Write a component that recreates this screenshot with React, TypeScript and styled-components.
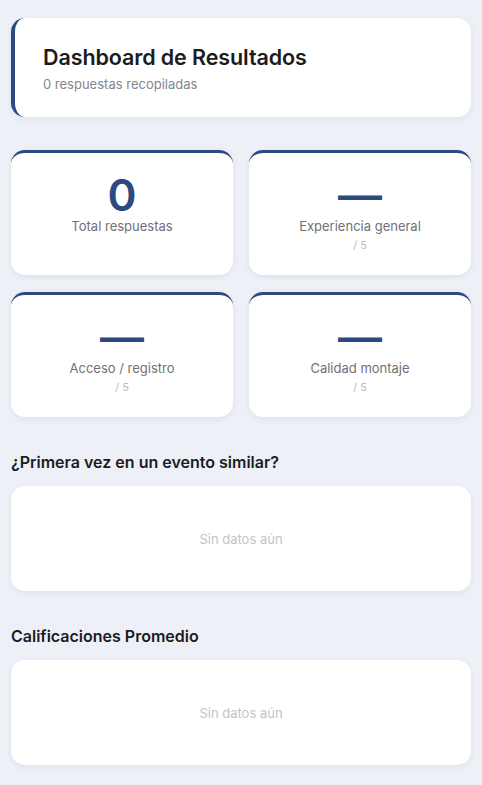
import styled, { createGlobalStyle } from "styled-components";

const GlobalStyle = createGlobalStyle`
  body {
    margin: 0;
    background: #edf0f7;
    font-family: Inter, "Noto Sans", sans-serif;
  }
`;

const Page = styled.div`
  padding: 18px 11px 20px;
`;

const HeaderCard = styled.div`
  background: #ffffff;
  border-left: 4px solid #2b4a80;
  border-radius: 14px;
  padding: 25px 28px 24px;
  box-shadow: 0 2px 6px rgba(30, 40, 70, 0.07);
`;

const Title = styled.h1`
  margin: 0;
  font-size: 21.5px;
  font-weight: 600;
  line-height: 28px;
  color: #1b1c20;
  letter-spacing: -0.1px;
`;

const Subtitle = styled.div`
  margin-top: 4px;
  font-size: 13px;
  line-height: 18px;
  color: #85868c;
`;

const StatGrid = styled.div`
  display: grid;
  grid-template-columns: 1fr 1fr;
  gap: 17px 16px;
  margin-top: 33px;
`;

const StatCard = styled.div`
  background: #ffffff;
  border-top: 3px solid #2b4a80;
  border-radius: 14px;
  height: 125px;
  box-sizing: border-box;
  display: flex;
  flex-direction: column;
  align-items: center;
  padding-top: 19px;
  box-shadow: 0 2px 6px rgba(30, 40, 70, 0.07);
`;

const StatValue = styled.div`
  font-size: 44px;
  font-weight: 600;
  line-height: 46px;
  color: #2b4a80;
`;

const StatLabel = styled.div`
  margin-top: 1px;
  font-size: 13px;
  line-height: 14px;
  color: #707177;
`;

const StatUnit = styled.div`
  margin-top: 5px;
  font-size: 11px;
  line-height: 14px;
  color: #b9babd;
`;

const Section = styled.section`
  margin-top: 35px;
`;

const SectionTitle = styled.h2`
  margin: 0 0 14px;
  font-size: 16px;
  font-weight: 600;
  line-height: 20px;
  color: #1b1c20;
`;

const EmptyCard = styled.div`
  background: #ffffff;
  border-radius: 14px;
  height: 105px;
  display: flex;
  align-items: center;
  justify-content: center;
  font-size: 13px;
  color: #c3c4c7;
  box-shadow: 0 2px 6px rgba(30, 40, 70, 0.07);
`;

interface IStat {
  value: string;
  label: string;
  unit?: string;
}

const stats: IStat[] = [
  { value: "0", label: "Total respuestas" },
  { value: "—", label: "Experiencia general", unit: "/ 5" },
  { value: "—", label: "Acceso / registro", unit: "/ 5" },
  { value: "—", label: "Calidad montaje", unit: "/ 5" },
];

function App() {
  return (
    <>
      <GlobalStyle />
      <Page>
        <HeaderCard>
          <Title>Dashboard de Resultados</Title>
          <Subtitle>0 respuestas recopiladas</Subtitle>
        </HeaderCard>

        <StatGrid>
          {stats.map((s) => (
            <StatCard key={s.label}>
              <StatValue>{s.value}</StatValue>
              <StatLabel>{s.label}</StatLabel>
              {s.unit && <StatUnit>{s.unit}</StatUnit>}
            </StatCard>
          ))}
        </StatGrid>

        <Section>
          <SectionTitle>¿Primera vez en un evento similar?</SectionTitle>
          <EmptyCard>Sin datos aún</EmptyCard>
        </Section>

        <Section>
          <SectionTitle>Calificaciones Promedio</SectionTitle>
          <EmptyCard>Sin datos aún</EmptyCard>
        </Section>
      </Page>
    </>
  );
}

export default App;
